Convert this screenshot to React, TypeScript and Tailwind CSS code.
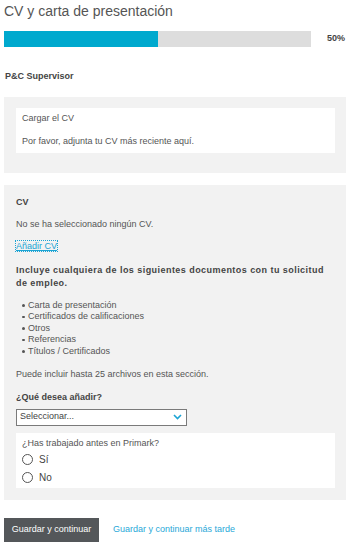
const docs = [
    'Carta de presentación',
    'Certificados de calificaciones',
    'Otros',
    'Referencias',
    'Títulos / Certificados',
];

const App = () => {
    return (
        <div className="w-[350px] h-[547px] bg-white px-1 text-[9px] leading-[11.5px] text-[#555] font-['Liberation_Sans',Arial,sans-serif]">
            <h1 className="pt-[2px] text-[14px] leading-[18px] font-normal text-[#555]">CV y carta de presentación</h1>

            <div className="mt-[11px] flex items-center">
                <div className="w-[307px] h-4 bg-[#dddddd]">
                    <div className="w-1/2 h-full bg-[#00a9ce]" />
                </div>
                <span className="ml-auto mr-[1px] font-bold text-[#444]">50%</span>
            </div>

            <p className="mt-[24px] pl-px font-bold text-[#444]">P&amp;C Supervisor</p>

            <section className="mt-[14px] bg-[#f2f2f2] pt-[11px] pb-[20px] pl-3 pr-[11px]">
                <div className="bg-white px-[6px] pt-[5px] pb-[6px]">
                    <p>Cargar el CV</p>
                    <p className="mt-[11.5px]">Por favor, adjunta tu CV más reciente aquí.</p>
                </div>
            </section>

            <section className="mt-3 bg-[#f2f2f2] pt-3 pb-3 pl-3 pr-[11px]">
                <p className="font-bold text-[#444]">CV</p>
                <p className="mt-[10.5px]">No se ha seleccionado ningún CV.</p>
                <div className="mt-[10.5px]">
                    <a href="#" className="text-[#1ca4d4] underline outline-1 outline-dotted outline-[#1ca4d4]">Añadir CV</a>
                </div>
                <p className="mt-[11px] font-bold leading-[13px] tracking-[0.45px] text-[#444]">
                    Incluye cualquiera de los siguientes documentos con tu solicitud de empleo.
                </p>
                <ul className="mt-[10px] pl-[6px]">
                    {docs.map((d) => (
                        <li key={d} className="flex items-center">
                            <span className="w-[2.5px] h-[2.5px] rounded-full bg-[#555] mr-[3.5px]" />
                            {d}
                        </li>
                    ))}
                </ul>
                <p className="mt-[11.5px]">Puede incluir hasta 25 archivos en esta sección.</p>
                <p className="mt-[11.5px] font-bold text-[#444]">¿Qué desea añadir?</p>
                <div className="mt-[5.5px] w-[171px] h-[17px] border border-[#7a7a7a] bg-white flex items-center justify-between pl-[3px] pr-[3px]">
                    <span className="text-[#444]">Seleccionar...</span>
                    <svg width="9" height="6" viewBox="0 0 9 6" className="mr-[1px]">
                        <path d="M1 1 L4.5 4.5 L8 1" fill="none" stroke="#1ca4d4" strokeWidth="1.6" />
                    </svg>
                </div>
                <div className="mt-[7px] bg-white px-[6px] pt-[5px] pb-[5px]">
                    <p>¿Has trabajado antes en Primark?</p>
                    {['Sí', 'No'].map((o, i) => (
                        <label key={o} className={`flex items-center ${i === 0 ? 'mt-[5px]' : 'mt-[6px]'}`}>
                            <span className="w-[11px] h-[11px] rounded-full border border-[#555] bg-white" />
                            <span className="ml-[6px] text-[10px] text-[#444]">{o}</span>
                        </label>
                    ))}
                </div>
            </section>

            <div className="mt-[18px] flex items-center">
                <button className="w-[95px] h-6 bg-[#54575a] text-white text-[9px]">Guardar y continuar</button>
                <a href="#" className="ml-[14px] text-[#29a8d8]">Guardar y continuar más tarde</a>
            </div>
        </div>
    );
};

export default App;
